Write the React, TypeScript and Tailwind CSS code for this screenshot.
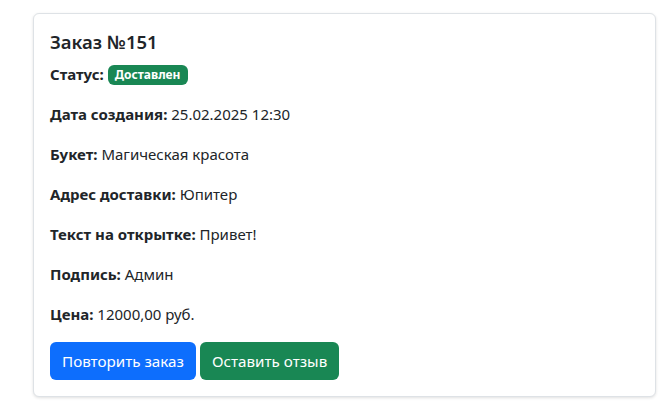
const Field = ({ label, value }: { label: string; value: string }) => (
  <p className="mb-4 leading-6">
    <span className="font-bold">{label}:</span> {value}
  </p>
);

export default function App() {
  return (
    <div
      className="min-h-screen bg-white pt-[13px] pl-[33px] text-[15px] text-[#212529]"
      style={{ fontFamily: '"Noto Sans", "Open Sans", sans-serif' }}
    >
      <div className="w-[623px] rounded-md border border-[#dee2e6] bg-white p-4 shadow-[0_1px_3px_rgba(0,0,0,0.12)]">
        <h5 className="mb-2 text-[18.5px] font-semibold leading-6">Заказ №151</h5>
        <p className="mb-4 leading-6">
          <span className="font-bold">Статус:</span>{" "}
          <span className="inline-block rounded-md bg-[#198754] px-[7px] py-[4px] align-[1px] text-[12px] font-bold leading-none text-white">
            Доставлен
          </span>
        </p>
        <Field label="Дата создания" value="25.02.2025 12:30" />
        <Field label="Букет" value="Магическая красота" />
        <Field label="Адрес доставки" value="Юпитер" />
        <Field label="Текст на открытке" value="Привет!" />
        <Field label="Подпись" value="Админ" />
        <Field label="Цена" value="12000,00 руб." />
        <div className="flex gap-1">
          <button className="h-[38px] rounded-md bg-[#0d6efd] px-3 text-[15.2px] leading-6 text-white">
            Повторить заказ
          </button>
          <button className="h-[38px] rounded-md bg-[#198754] px-3 text-[15.2px] leading-6 text-white">
            Оставить отзыв
          </button>
        </div>
      </div>
    </div>
  );
}
